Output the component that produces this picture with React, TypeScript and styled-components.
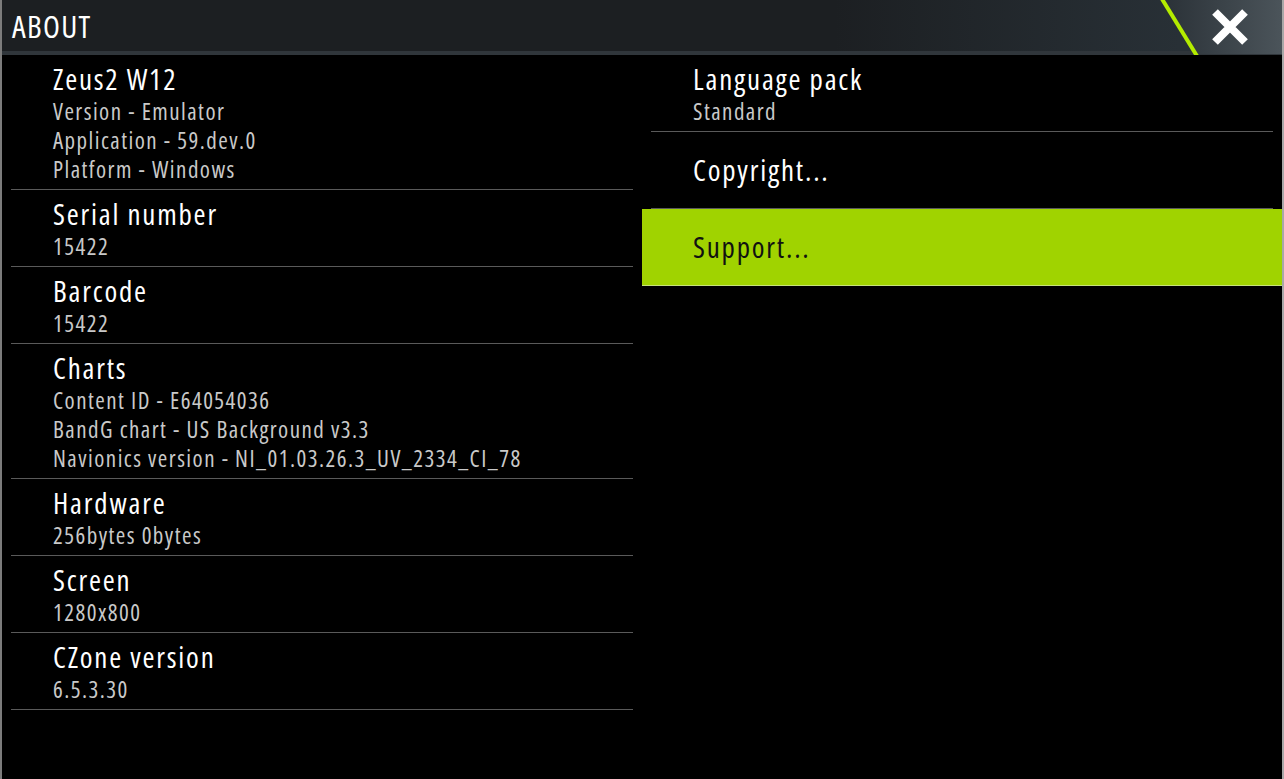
import React from "react";
import styled, { createGlobalStyle } from "styled-components";

const Global = createGlobalStyle`
  html, body { margin: 0; padding: 0; background: #000; }
  body { font-family: "Open Sans", "Noto Sans", sans-serif; font-stretch: 75%; }
  * { box-sizing: border-box; }
`;

const Window = styled.div`
  width: 1284px;
  height: 779px;
  background: #000;
  border-left: 2px solid #7c7c7c;
  border-right: 2px solid #a8a8a8;
  display: flex;
  flex-direction: column;
  overflow: hidden;
`;

const Header = styled.header`
  position: relative;
  height: 55px;
  flex: none;
  display: flex;
  align-items: flex-start;
  background:
    linear-gradient(to bottom, transparent 0 51px, #30363b 51px 55px),
    linear-gradient(to right, #1c1f22 0 65%, #283036 92%);
`;

const HeaderTitle = styled.h1`
  margin: 0;
  padding: 7px 0 0 10px;
  font-size: 31px;
  line-height: 38px;
  letter-spacing: 1.3px;
  font-weight: 400;
  color: #fff;
`;

const Corner = styled.div`
  position: absolute;
  right: 0;
  top: 0;
  width: 124px;
  height: 55px;
  display: flex;
  align-items: center;
  justify-content: flex-end;
`;

const CornerArt = styled.svg`
  position: absolute;
  inset: 0;
`;

const CloseButton = styled.button`
  position: relative;
  width: 36px;
  height: 36px;
  margin: 0 34px 1px 0;
  padding: 0;
  border: 0;
  background: transparent;
  display: flex;
  align-items: center;
  justify-content: center;
`;

const Body = styled.main`
  flex: 1;
  display: grid;
  grid-template-columns: 640px 640px;
  align-items: start;
`;

const Column = styled.section`
  display: flex;
  flex-direction: column;
`;

const Item = styled.div<{ $selected?: boolean }>`
  background: ${(p) => (p.$selected ? "#a0d300" : "transparent")};
  padding: 0 9px;
  ${(p) => (p.$selected ? "box-shadow: inset 0 -1px 0 #c6e27a;" : "")}
`;

const ItemInner = styled.div<{ $single?: boolean; $selected?: boolean }>`
  padding: ${(p) => (p.$single ? "0 0 0 42px" : "8px 0 5px 42px")};
  min-height: ${(p) => (p.$single ? "77px" : "0")};
  display: flex;
  flex-direction: column;
  justify-content: center;
  border-bottom: 1px solid ${(p) => (p.$selected ? "transparent" : "#5a5a5a")};
`;

const Title = styled.div<{ $dark?: boolean; $single?: boolean }>`
  font-size: 29px;
  line-height: 32px;
  letter-spacing: 1.8px;
  color: ${(p) => (p.$dark ? "#111" : "#fff")};
  margin-bottom: ${(p) => (p.$single ? "0" : "2px")};
  white-space: nowrap;
`;

const Sub = styled.div`
  font-size: 23px;
  line-height: 29px;
  letter-spacing: 1.45px;
  color: #c9c9c9;
  white-space: nowrap;
`;

type Entry = { title: string; subs?: string[]; selected?: boolean };

const left: Entry[] = [
  { title: "Zeus2 W12", subs: ["Version - Emulator", "Application - 59.dev.0", "Platform - Windows"] },
  { title: "Serial number", subs: ["15422"] },
  { title: "Barcode", subs: ["15422"] },
  {
    title: "Charts",
    subs: ["Content ID - E64054036", "BandG chart - US Background v3.3", "Navionics version - NI_01.03.26.3_UV_2334_CI_78"],
  },
  { title: "Hardware", subs: ["256bytes 0bytes"] },
  { title: "Screen", subs: ["1280x800"] },
  { title: "CZone version", subs: ["6.5.3.30"] },
];

const right: Entry[] = [
  { title: "Language pack", subs: ["Standard"] },
  { title: "Copyright..." },
  { title: "Support...", selected: true },
];

function Row({ e }: { e: Entry }) {
  const single = !e.subs;
  return (
    <Item $selected={e.selected}>
      <ItemInner $single={single} $selected={e.selected}>
        <Title $dark={e.selected} $single={single}>
          {e.title}
        </Title>
        {e.subs?.map((s) => (
          <Sub key={s}>{s}</Sub>
        ))}
      </ItemInner>
    </Item>
  );
}

export default function App() {
  return (
    <>
      <Global />
      <Window>
        <Header>
          <HeaderTitle>ABOUT</HeaderTitle>
          <Corner>
            <CornerArt width="124" height="55" viewBox="0 0 124 55">
              <defs>
                <linearGradient id="rg" x1="0" y1="0" x2="1" y2="0">
                  <stop offset="0" stopColor="#2a3137" />
                  <stop offset="1" stopColor="#4b545a" />
                </linearGradient>
              </defs>
              <polygon points="4,0 124,0 124,54 38,54" fill="url(#rg)" />
              <line x1="4" y1="-1" x2="39" y2="56" stroke="#b4ec00" strokeWidth="4" />
            </CornerArt>
            <CloseButton aria-label="Close">
              <svg width="36" height="36" viewBox="0 0 36 36">
                <path d="M3 3 L33 33 M33 3 L3 33" stroke="#fff" strokeWidth="8" />
              </svg>
            </CloseButton>
          </Corner>
        </Header>
        <Body>
          <Column>
            {left.map((e) => (
              <Row key={e.title} e={e} />
            ))}
          </Column>
          <Column>
            {right.map((e) => (
              <Row key={e.title} e={e} />
            ))}
          </Column>
        </Body>
      </Window>
    </>
  );
}
